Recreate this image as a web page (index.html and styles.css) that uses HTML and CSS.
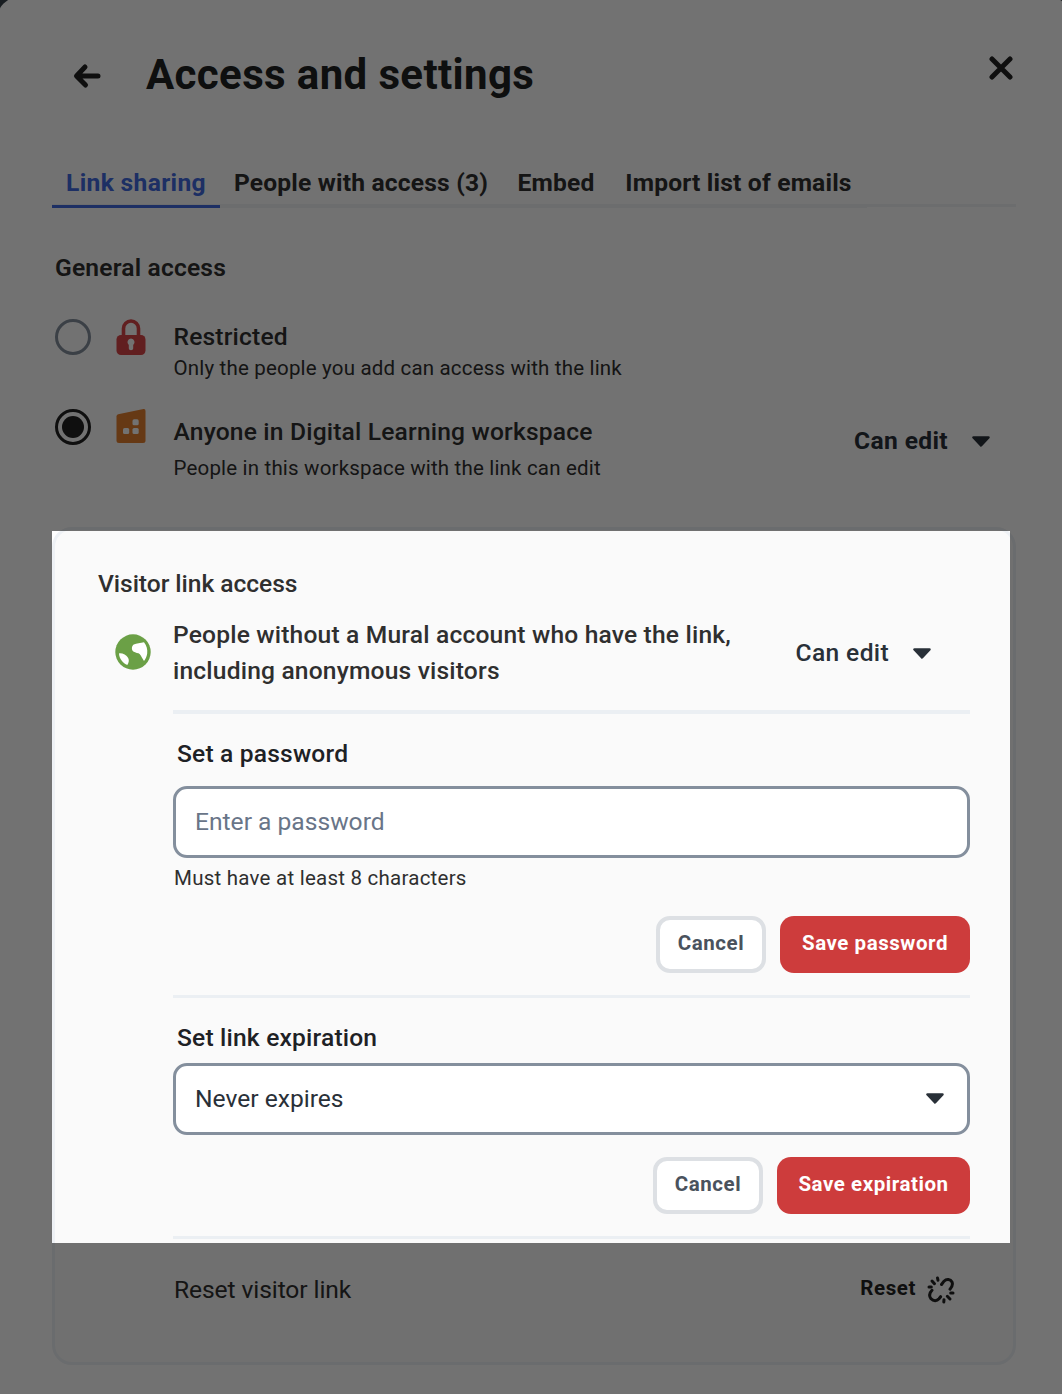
FILE: index.html
```html
<!DOCTYPE html>
<html lang="en">
<head>
    <meta charset="utf-8">
    <title>Access and settings</title>
    <link rel="stylesheet" href="styles.css">
</head>
<body>
    <div class="dialog">
        <header class="header">
            <svg class="back" width="28" height="26" viewBox="0 0 28 26">
                <path d="M25 13H4M12 4L3.500 13L12.500 22" />
            </svg>
            <h1 class="title">Access and settings</h1>
            <svg class="close" width="24" height="24" viewBox="0 0 24 24">
                <path d="M3 3L21 21M21 3L3 21" />
            </svg>
        </header>

        <nav class="tabs">
            <div class="tab-list">
                <a class="tab active">Link sharing</a>
                <a class="tab">People with access (3)</a>
                <a class="tab">Embed</a>
                <a class="tab">Import list of emails</a>
            </div>
        </nav>

        <section class="general">
            <h2 class="general-title">General access</h2>
            <div class="option restricted">
                <span class="radio"></span>
                <svg class="option-icon" width="30" height="36" viewBox="0 0 30 36">
                    <path d="M7.500 18V9.500a7.500 7.500 0 0 1 15 0V18" fill="none" stroke="#da4649" stroke-width="3.600" />
                    <rect x="0.500" y="16" width="29" height="20" rx="4.500" fill="#da4649" />
                    <path d="M15 19.500a3.600 3.600 0 0 0-2.200 6.400L12.800 29.500a2.200 1.800 0 0 0 4.400 0L17.200 25.900A3.600 3.600 0 0 0 15 19.500z" fill="#fff" />
                </svg>
                <div class="option-text">
                    <div class="option-name">Restricted</div>
                    <div class="option-note">Only the people you add can access with the link</div>
                </div>
            </div>
            <div class="option workspace">
                <span class="radio checked"></span>
                <svg class="option-icon" width="30" height="36" viewBox="0 0 30 36">
                    <path d="M2.200 5.200L27.500 0.100Q29.500 -0.200 29.500 1.900V31.500Q29.500 34 27 34H3Q0.500 34 0.500 31.500V7.400Q0.500 5.600 2.200 5.200z" fill="#e58030" />
                    <rect x="16.500" y="10.300" width="6.200" height="6" rx="1.600" fill="#fff" />
                    <rect x="7" y="19" width="6.200" height="6" rx="1.600" fill="#fff" />
                    <rect x="16.500" y="19" width="6.200" height="6" rx="1.600" fill="#fff" />
                </svg>
                <div class="option-text">
                    <div class="option-name">Anyone in Digital Learning workspace</div>
                    <div class="option-note">People in this workspace with the link can edit</div>
                </div>
                <div class="permission bold">
                    Can edit
                    <svg class="caret" width="18" height="11" viewBox="0 0 18 11"><path d="M1.500 1.500H16.500L9 9.500z" /></svg>
                </div>
            </div>
        </section>

        <section class="card">
            <h2 class="card-title">Visitor link access</h2>
            <div class="visitor">
                <svg class="globe" width="36" height="36" viewBox="0 0 36 36">
                    <circle cx="18" cy="18" r="17.700" fill="#6ba046" />
                    <path d="M29 8.200C31.500 11.300 32.800 15.300 32.200 19.500C31.700 22.600 30.500 25 29 27C27.600 25.200 26.200 21.500 24.600 20C23.500 18.700 20.500 18.900 18.300 17.400C16.200 15.900 16.600 11.800 18.800 10.500C21.500 9.300 25.500 9.100 29 8.200z" fill="#fff" />
                    <path d="M4 19.400C7.500 19 11.300 20.700 13.200 24C14.300 26.400 13.800 28.900 12.300 31C8 29 4.200 24.500 4 19.400z" fill="#fff" />
                </svg>
                <p class="visitor-text">People without a Mural account who have the link,<br>including anonymous visitors</p>
                <div class="permission">
                    Can edit
                    <svg class="caret" width="18" height="11" viewBox="0 0 18 11"><path d="M1.500 1.500H16.500L9 9.500z" /></svg>
                </div>
            </div>

            <div class="settings">
                <div class="group password">
                    <label class="label">Set a password</label>
                    <div class="field placeholder">Enter a password</div>
                    <p class="hint">Must have at least 8 characters</p>
                    <div class="buttons">
                        <button class="button cancel">Cancel</button>
                        <button class="button save">Save password</button>
                    </div>
                </div>
                <div class="group expiration">
                    <label class="label">Set link expiration</label>
                    <div class="field">
                        Never expires
                        <svg class="caret" width="18" height="11" viewBox="0 0 18 11"><path d="M1.500 1.500H16.500L9 9.500z" /></svg>
                    </div>
                    <div class="buttons">
                        <button class="button cancel">Cancel</button>
                        <button class="button save wide">Save expiration</button>
                    </div>
                </div>
                <div class="group reset">
                    <span class="reset-text">Reset visitor link</span>
                    <span class="reset-action">
                        Reset
                        <svg class="unlink" width="28" height="28" viewBox="0 0 28 28">
                            <path d="M14.500 8.500L17 5.200C19.500 2.600 23.500 3 25 6C26 8.500 25.500 10.500 23 13.200" />
                            <path d="M5 14.300C2.300 17 1.900 20 4 22.800C6.500 25.400 9.800 25.300 12 22.700L13.600 20.700" />
                            <path d="M10.500 2L11 4.200M5 5L7.500 7.700M2 11H4.300M23.700 17H26M20.300 20.300L23 23M17 23.700L16.800 26" />
                        </svg>
                    </span>
                </div>
            </div>
        </section>
    </div>
    <div class="spotlight"></div>
</body>
</html>
```
FILE: styles.css
```css
* {
    box-sizing: border-box;
}
body {
    margin: 0;
    height: 1394px;
    overflow: hidden;
    background: #37424a;
    color: #2f2f2f;
    font-family: Roboto, "Liberation Sans", sans-serif;
    font-size: 24.6px;
    letter-spacing: 0.18px;
}
h1, h2, p {
    margin: 0;
    font-size: inherit;
}
svg {
    display: block;
    flex: none;
}
.dialog {
    display: flow-root;
    height: 1400px;
    margin: -4px -9px 0 -4px;
    padding: 4px 54px 0 56px;
    border-radius: 26px 24px 0 0;
    background: #fff;
}
.header {
    display: flex;
    align-items: center;
    height: 148px;
    padding: 0 4px 0 21px;
}
.back, .close {
    fill: none;
    stroke: #222;
    stroke-width: 5;
    stroke-linecap: round;
    stroke-linejoin: round;
}
.back {
    margin-top: 4px;
}
.title {
    margin-left: 45px;
    color: #212223;
    font-size: 42px;
    font-weight: 700;
    letter-spacing: 0.37px;
}
.close {
    margin: -13px 0 0 auto;
}

/* tabs */
.tabs {
    display: flex;
    align-items: flex-start;
    width: 964px;
    height: 60px;
}
.tabs::after {
    content: "";
    flex: 1;
    height: 56px;
    border-bottom: 3px solid #f1f3f7;
}
.tab-list {
    display: grid;
    grid-template-columns: 168px 282px 108px 257px;
    height: 60px;
    box-shadow: inset 0 -4px #f1f3f7;
}
.tab {
    height: 60px;
    padding-top: 10px;
    font-weight: 700;
    line-height: 50px;
    text-align: center;
    white-space: nowrap;
}
.tab.active {
    border-bottom: 3px solid #416ae0;
    color: #416ae0;
    letter-spacing: 0.35px;
}

/* general access */
.general {
    height: 319px;
    padding: 40px 27px 0 3px;
}
.general-title {
    font-weight: 600;
    line-height: 40px;
}
.option {
    display: flex;
    align-items: flex-start;
}
.restricted {
    height: 90px;
    margin-top: 31px;
}
.radio {
    flex: none;
    width: 36px;
    height: 36px;
    border: 3px solid #848f9d;
    border-radius: 50%;
}
.radio.checked {
    padding: 4px;
    border-color: #222;
    background: #222 content-box;
}
.option-icon {
    margin-left: 24.5px;
}
.option-text {
    margin-left: 28px;
}
.option-name {
    font-weight: 500;
    line-height: 36px;
}
.option-note {
    font-size: 20.5px;
    line-height: 26px;
}
.workspace .option-text {
    padding-top: 5px;
}
.workspace .option-note {
    padding-top: 5px;
}
.permission {
    display: flex;
    align-items: center;
    gap: 24px;
    margin-left: auto;
    color: #293038;
    font-weight: 500;
    line-height: 36px;
    letter-spacing: 0.35px;
}
.permission.bold {
    margin-top: 14px;
    font-weight: 700;
}
.caret path {
    fill: #293038;
    stroke: #293038;
    stroke-width: 2.5;
    stroke-linejoin: round;
}

/* visitor link card */
.card {
    width: 964px;
    height: 838px;
    padding: 34px 43px 0 43px;
    border: 3px solid #eef1f5;
    border-radius: 20px;
    background: #fafafa;
}
.card-title {
    font-weight: 500;
    letter-spacing: -0.05px;
    line-height: 40px;
}
.visitor {
    display: flex;
    height: 106px;
    padding: 13px 39px 0 17px;
}
.globe {
    margin-top: 17px;
}
.visitor-text {
    margin-left: 22px;
    font-weight: 500;
    line-height: 36px;
    white-space: nowrap;
}
.visitor .permission {
    height: 72px;
}
.settings {
    width: 797px;
    margin-left: 75px;
}
.group {
    border-top: 3px solid #ebeff3;
}
.password {
    height: 285px;
    padding-top: 22px;
    border-top-width: 4px;
}
.expiration {
    height: 241px;
    padding-top: 22px;
}
.label {
    display: block;
    padding-left: 4px;
    color: #1e2125;
    font-weight: 500;
    line-height: 36px;
}
.field {
    display: flex;
    align-items: center;
    justify-content: space-between;
    height: 72px;
    margin-top: 14px;
    padding: 0 23px 2px 19px;
    border: 3px solid #848f9d;
    border-radius: 14px;
    background: #fff;
    color: #293038;
    letter-spacing: 0;
}
.expiration .field {
    margin-top: 7px;
}
.placeholder {
    color: #697588;
}
.hint {
    padding: 6px 0 0 1px;
    font-size: 20.5px;
    letter-spacing: 0.24px;
    line-height: 28px;
}
.buttons {
    display: flex;
    justify-content: flex-end;
    gap: 14px;
    margin-top: 24px;
}
.expiration .buttons {
    margin-top: 22px;
}
.button {
    height: 57px;
    padding: 0 0 3px;
    border: 0;
    border-radius: 14px;
    font-family: inherit;
    font-size: 20.5px;
    font-weight: 700;
    letter-spacing: 0.55px;
}
.cancel {
    width: 110px;
    border: 4px solid #dde0e4;
    background: #fff;
    color: #4a525d;
}
.save {
    width: 190px;
    background: #cd3c3c;
    color: #fff;
}
.save.wide {
    width: 193px;
}
.reset {
    display: flex;
    justify-content: space-between;
    padding: 33px 15px 0 1px;
    line-height: 36px;
}
.reset-text {
    letter-spacing: -0.1px;
}
.reset-action {
    display: flex;
    align-items: center;
    gap: 11px;
    height: 32px;
    color: #222;
    font-size: 20.5px;
    font-weight: 700;
    letter-spacing: 0.6px;
}
.unlink {
    margin-top: 3px;
    fill: none;
    stroke: #222;
    stroke-width: 3;
    stroke-linecap: round;
}

/* dims everything except the highlighted area */
.spotlight {
    position: absolute;
    top: 531px;
    left: 52px;
    width: 958px;
    height: 712px;
    box-shadow: 0 0 0 1500px rgba(0, 0, 0, 0.553);
}
```
